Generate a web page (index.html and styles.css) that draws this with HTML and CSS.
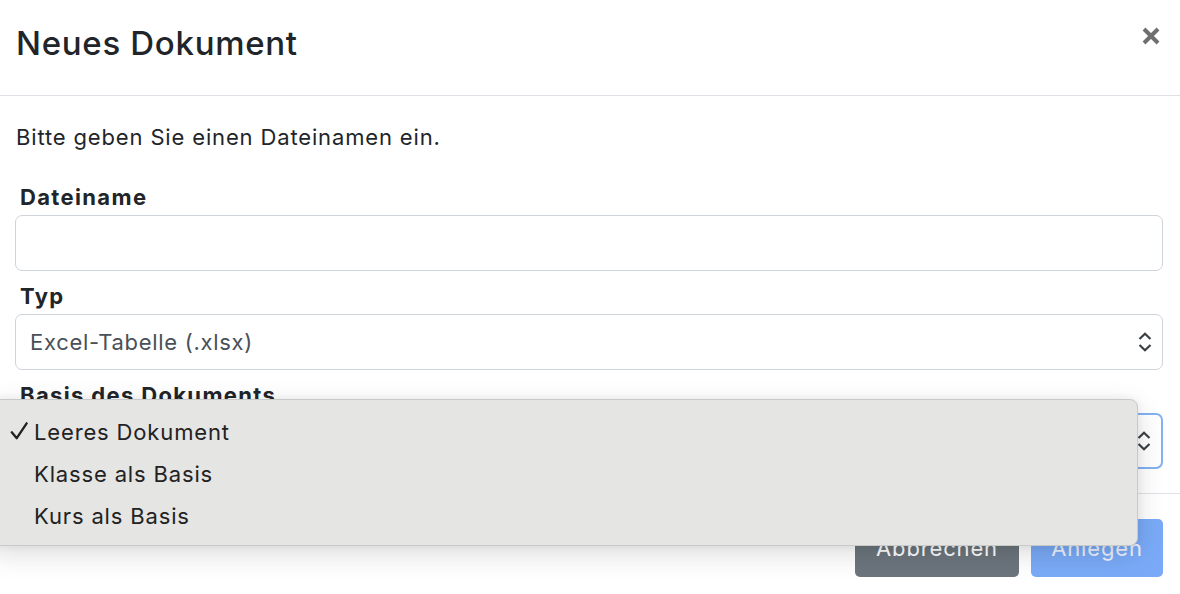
FILE: index.html
```html
<!DOCTYPE html>
<html lang="de">
<head>
<meta charset="utf-8">
<title>Neues Dokument</title>
<link rel="stylesheet" href="styles.css">
</head>
<body>
<div class="modal">
  <header class="modal-header">
    <h1 class="modal-title">Neues Dokument</h1>
    <button class="close" aria-label="Schließen">
      <svg width="18" height="18" viewBox="0 0 18 18"><path d="M2 2 L16 16 M16 2 L2 16" stroke="#6f6f6f" stroke-width="4" stroke-linecap="butt" fill="none"/></svg>
    </button>
  </header>
  <div class="modal-body">
    <p class="intro">Bitte geben Sie einen Dateinamen ein.</p>
    <div class="field">
      <label class="label">Dateiname</label>
      <div class="control"></div>
    </div>
    <div class="field">
      <label class="label">Typ</label>
      <div class="control select">
        <span class="value">Excel-Tabelle (.xlsx)</span>
        <svg class="chev" width="14" height="20" viewBox="0 0 14 20"><path d="M1.5 7 L7 1.8 L12.5 7 M1.5 13 L7 18.2 L12.5 13" stroke="#3a3f44" stroke-width="2.2" fill="none"/></svg>
      </div>
    </div>
    <div class="field">
      <label class="label">Basis des Dokuments</label>
      <div class="control select focus">
        <span class="value">Leeres Dokument</span>
        <svg class="chev" width="14" height="20" viewBox="0 0 14 20"><path d="M1.5 7 L7 1.8 L12.5 7 M1.5 13 L7 18.2 L12.5 13" stroke="#3a3f44" stroke-width="2.2" fill="none"/></svg>
      </div>
    </div>
  </div>
  <footer class="modal-footer">
    <button class="btn btn-secondary">Abbrechen</button>
    <button class="btn btn-primary" disabled>Anlegen</button>
  </footer>
  <ul class="menu">
    <li class="item checked"><svg class="check" width="20" height="20" viewBox="0 0 20 20"><path d="M2 11.5 L7.5 18 L18.5 1.5" stroke="#222" stroke-width="2.6" fill="none" stroke-linecap="round" stroke-linejoin="round"/></svg>Leeres Dokument</li>
    <li class="item">Klasse als Basis</li>
    <li class="item">Kurs als Basis</li>
  </ul>
</div>
</body>
</html>
```
FILE: styles.css
```css
html, body {
  margin: 0;
  padding: 0;
  background: #ffffff;
}
body {
  font-family: Inter, "Liberation Sans", sans-serif;
  color: #212529;
  width: 1180px;
  height: 594px;
  overflow: hidden;
}
.modal {
  position: relative;
  width: 1180px;
}
.modal-header {
  height: 95px;
  border-bottom: 1px solid #dee2e6;
  display: flex;
  align-items: flex-start;
  justify-content: space-between;
  padding: 0 20px 0 16px;
  box-sizing: content-box;
}
.modal-title {
  margin: 0;
  padding-top: 21px;
  font-size: 33px;
  line-height: 44px;
  font-weight: 500;
  letter-spacing: 0.7px;
}
.close {
  margin-top: 27px;
  padding: 0;
  border: 0;
  background: transparent;
  width: 18px;
  height: 18px;
  display: block;
}
.close svg { display: block; }
.modal-body {
  padding: 25px 17px 24px 15px;
  display: flex;
  flex-direction: column;
}
.intro {
  margin: 0 0 27px 1px;
  font-size: 22px;
  line-height: 33px;
  letter-spacing: 0.85px;
}
.field {
  display: flex;
  flex-direction: column;
}
.field + .field { margin-top: 9px; }
.label {
  font-size: 22px;
  line-height: 33px;
  font-weight: 700;
  letter-spacing: 1.35px;
  padding-left: 5px;
  margin-bottom: 1px;
}
.control {
  height: 56px;
  box-sizing: border-box;
  border: 1.5px solid #ced4da;
  border-radius: 7px;
  background: #fff;
  display: flex;
  align-items: center;
  padding: 0 10px 0 14px;
  font-size: 22px;
  letter-spacing: 0.7px;
  color: #495057;
}
.select { justify-content: space-between; }
.focus { border: 2px solid #82b2f4; }
.focus .value { visibility: hidden; }
.chev { display: block; margin-right: 0; }
.modal-footer {
  border-top: 1px solid #dee2e6;
  padding: 25px 17px 16px 15px;
  display: flex;
  justify-content: flex-end;
  gap: 12px;
}
.btn {
  height: 58px;
  border: 0;
  border-radius: 5px;
  font-family: Inter, "Liberation Sans", sans-serif;
  font-size: 22px;
  letter-spacing: 0.85px;
  line-height: 56px;
  color: #fff;
  padding: 0;
}
.btn-secondary { background: #6c757d; width: 164px; }
.btn-primary { background: #7aaaf7; width: 132px; color: #eef3fd; }
.menu {
  position: absolute;
  left: -10px;
  top: 399px;
  width: 1148px;
  height: 147px;
  box-sizing: border-box;
  margin: 0;
  padding: 11px 0 10px 0;
  list-style: none;
  background: #e5e5e4;
  border: 1px solid #c9c9c8;
  border-radius: 8px;
  box-shadow: 0 8px 28px rgba(0,0,0,0.14), 0 0 8px rgba(0,0,0,0.06);
}
.item {
  height: 42px;
  line-height: 42px;
  font-size: 22px;
  letter-spacing: 0.85px;
  color: #222;
  padding-left: 43px;
  position: relative;
}
.check {
  position: absolute;
  left: 19px;
  top: 11px;
  width: 18px;
  height: 18px;
}
```
